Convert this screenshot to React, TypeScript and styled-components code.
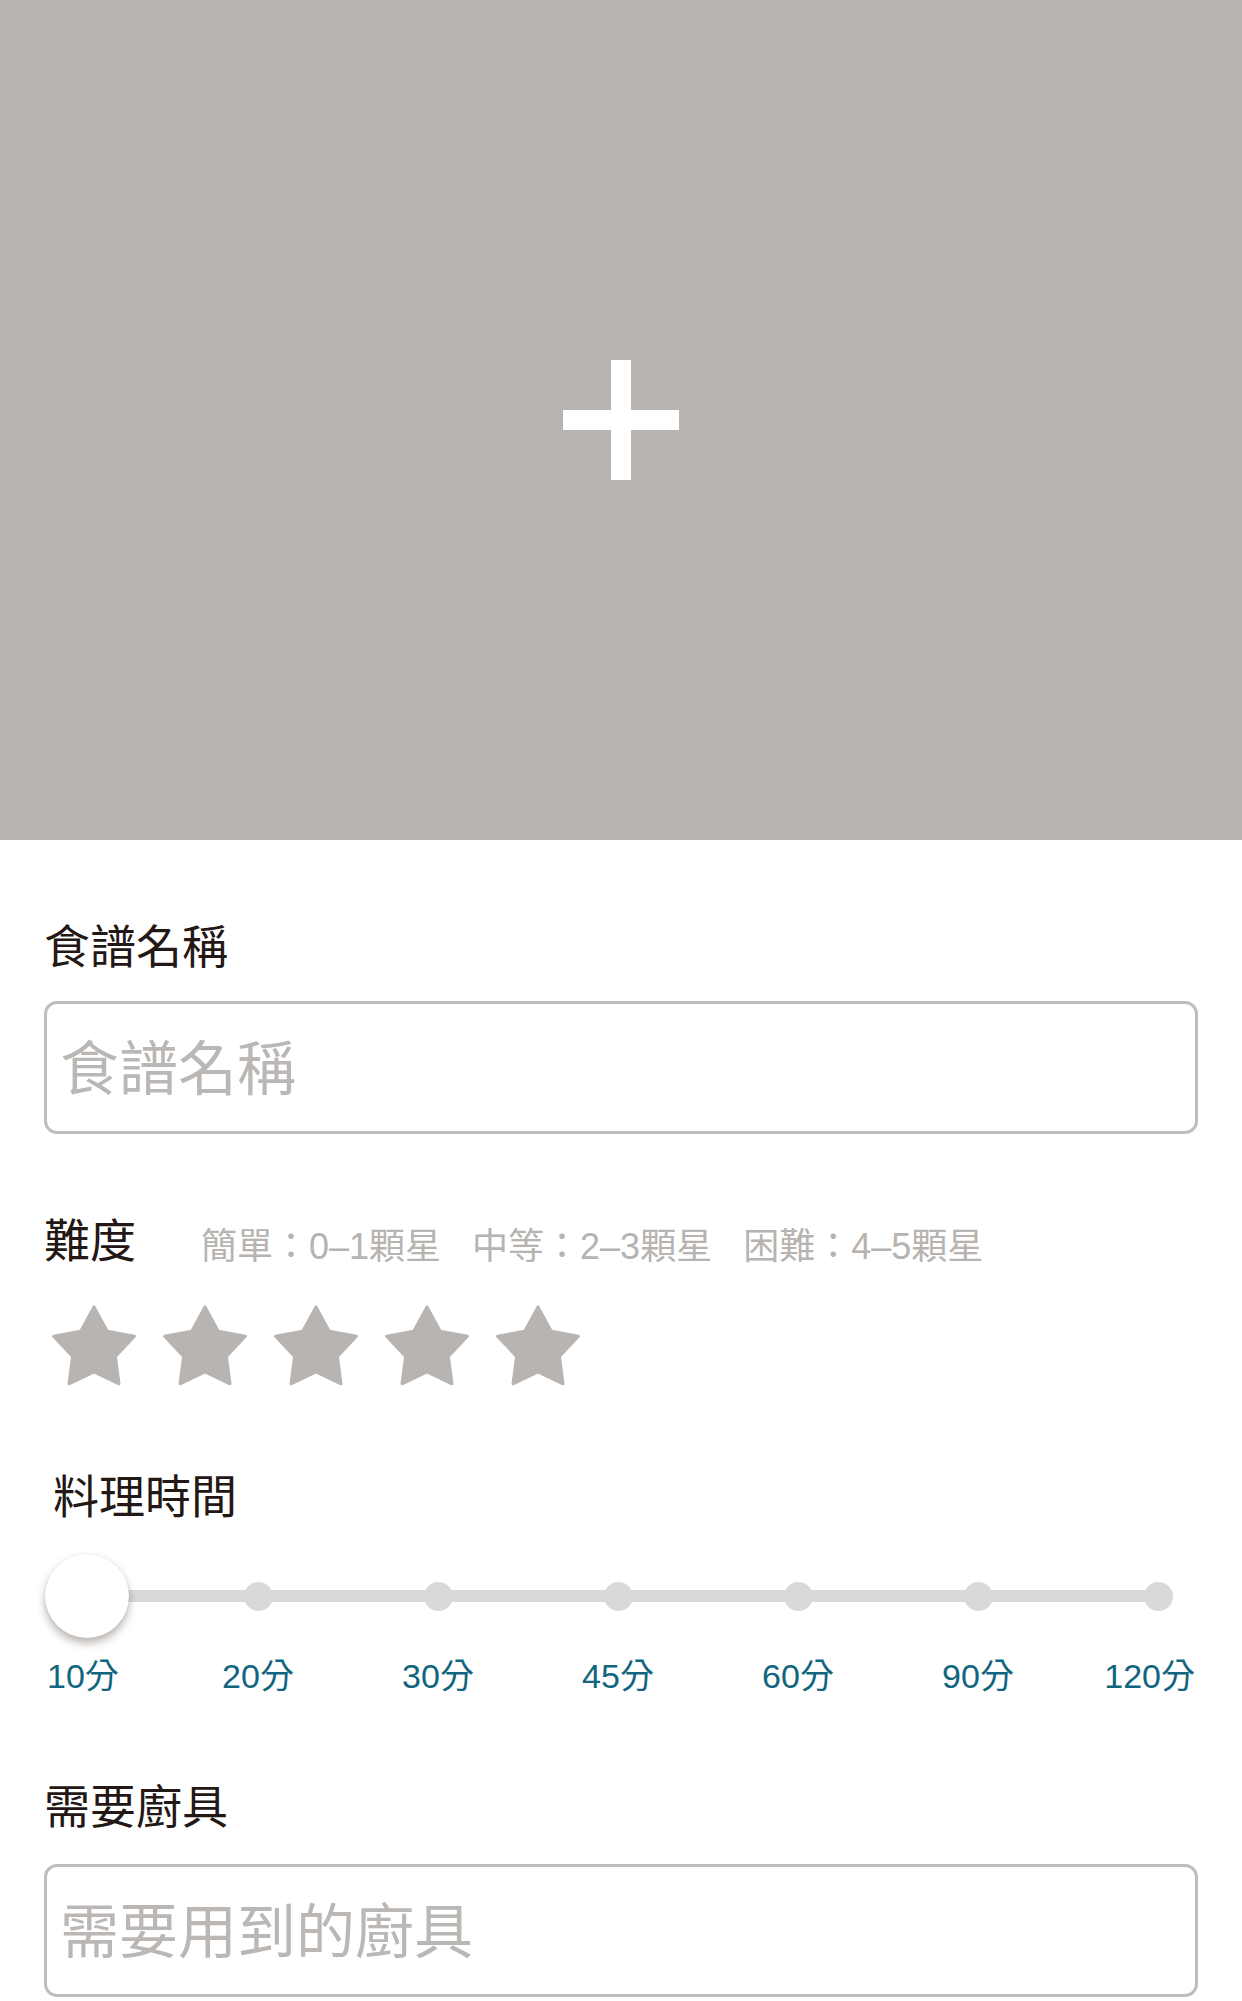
import React from "react";
import styled, { createGlobalStyle } from "styled-components";

const GlobalStyle = createGlobalStyle`
  html, body {
    margin: 0;
    padding: 0;
    background: #ffffff;
  }
  body {
    font-family: "Noto Sans CJK TC", "Noto Sans", sans-serif;
    -webkit-font-smoothing: antialiased;
  }
  *, *::before, *::after {
    box-sizing: border-box;
  }
`;

const Page = styled.main`
  width: 1242px;
  display: flex;
  flex-direction: column;
  background: #ffffff;
`;

const PhotoPicker = styled.div`
  height: 840px;
  display: flex;
  align-items: center;
  justify-content: center;
  background: #b8b4b1;
  cursor: pointer;
`;

const Form = styled.form`
  display: flex;
  flex-direction: column;
  padding: 0 44px;
`;

const Section = styled.section<{ $top: number }>`
  display: flex;
  flex-direction: column;
  margin-top: ${(p) => p.$top}px;
`;

const Label = styled.h2<{ $indent?: number }>`
  margin: 0;
  padding-left: ${(p) => p.$indent ?? 0}px;
  font-size: 46px;
  line-height: 1;
  font-weight: 400;
  color: #231815;
`;

const TextInput = styled.input<{ $gap: number }>`
  display: block;
  width: 100%;
  height: 133px;
  margin-top: ${(p) => p.$gap}px;
  padding: 0 13px 6px;
  border: 3px solid #c1bdba;
  border-radius: 13px;
  background: #ffffff;
  font-family: "Noto Sans CJK TC", "Noto Sans", sans-serif;
  font-size: 59px;
  color: #231815;
  outline: none;

  &::placeholder {
    color: #bbb7b4;
  }
`;

const DifficultyRow = styled.div`
  display: flex;
  align-items: flex-end;
`;

const Hints = styled.div`
  display: flex;
  gap: 31px;
  margin-left: 65px;
  margin-bottom: -5px;
  font-family: "Liberation Sans", "Noto Sans CJK TC", sans-serif;
  font-size: 36px;
  line-height: 1;
  color: #b7b3b0;
`;

const Hint = styled.span``;

const Stars = styled.div`
  display: flex;
  gap: 27px;
  margin-top: 45px;
  padding-left: 8px;
`;

const StarButton = styled.span`
  display: flex;
  width: 84px;
  height: 81px;
  cursor: pointer;
`;

const SLIDER_COLUMNS = "124px repeat(5, 180px) 1fr";

const SliderTrack = styled.div`
  position: relative;
  display: grid;
  grid-template-columns: ${SLIDER_COLUMNS};
  align-items: center;
  height: 84px;
  margin-top: 38px;

  &::before {
    content: "";
    position: absolute;
    left: 43px;
    right: 40px;
    top: 36px;
    height: 12px;
    border-radius: 6px;
    background: #d9d9d9;
  }
`;

type Align = "start" | "center" | "end";

const Stop = styled.div<{ $align: Align }>`
  position: relative;
  z-index: 1;
  display: flex;
  justify-content: ${(p) =>
    p.$align === "start" ? "flex-start" : p.$align === "end" ? "flex-end" : "center"};
  padding-right: ${(p) => (p.$align === "end" ? 25 : 0)}px;
`;

const Dot = styled.span`
  width: 29px;
  height: 29px;
  border-radius: 50%;
  background: #d9d9d9;
`;

const Thumb = styled.span`
  width: 84px;
  height: 84px;
  margin-left: 1px;
  border-radius: 50%;
  background: #ffffff;
  box-shadow: 0 5px 9px rgba(70, 55, 45, 0.38), 0 0 2px rgba(0, 0, 0, 0.08);
`;

const TickLabels = styled.div`
  display: grid;
  grid-template-columns: ${SLIDER_COLUMNS};
  margin-top: 21px;
  font-family: "Liberation Sans", "Noto Sans CJK TC", sans-serif;
  font-size: 34px;
  line-height: 1;
  color: #11657e;
`;

const TickLabel = styled.span<{ $align: Align }>`
  justify-self: ${(p) => p.$align};
  padding-left: ${(p) => (p.$align === "start" ? 3 : 0)}px;
  padding-right: ${(p) => (p.$align === "end" ? 3 : 0)}px;
  white-space: nowrap;
`;

const PlusIcon = () => (
  <svg width="116" height="120" viewBox="0 0 116 120" aria-hidden="true">
    <rect x="0" y="50" width="116" height="20" fill="#ffffff" />
    <rect x="48" y="0" width="20" height="120" fill="#ffffff" />
  </svg>
);

const STAR_POINTS = (() => {
  const cx = 42;
  const cy = 44.4;
  const R = 42.5;
  const r = 22.5;
  const pts: string[] = [];
  for (let k = 0; k < 10; k++) {
    const a = ((-90 + 36 * k) * Math.PI) / 180;
    const rad = k % 2 === 0 ? R : r;
    pts.push(`${(cx + rad * Math.cos(a)).toFixed(2)},${(cy + rad * Math.sin(a)).toFixed(2)}`);
  }
  return pts.join(" ");
})();

const StarIcon = () => (
  <svg width="84" height="81" viewBox="0 0 84 81" aria-hidden="true">
    <polygon
      points={STAR_POINTS}
      fill="#b8b4b1"
      stroke="#b8b4b1"
      strokeWidth="3"
      strokeLinejoin="round"
    />
  </svg>
);

const TIMES = ["10分", "20分", "30分", "45分", "60分", "90分", "120分"];

const alignFor = (i: number, n: number): Align =>
  i === 0 ? "start" : i === n - 1 ? "end" : "center";

export default function App() {
  return (
    <>
      <GlobalStyle />
      <Page>
        <PhotoPicker>
          <PlusIcon />
        </PhotoPicker>
        <Form onSubmit={(e) => e.preventDefault()}>
          <Section $top={80}>
            <Label>食譜名稱</Label>
            <TextInput $gap={35} placeholder="食譜名稱" />
          </Section>

          <Section $top={80}>
            <DifficultyRow>
              <Label>難度</Label>
              <Hints>
                <Hint>簡單：0–1顆星</Hint>
                <Hint>中等：2–3顆星</Hint>
                <Hint>困難：4–5顆星</Hint>
              </Hints>
            </DifficultyRow>
            <Stars>
              {[0, 1, 2, 3, 4].map((i) => (
                <StarButton key={i}>
                  <StarIcon />
                </StarButton>
              ))}
            </Stars>
          </Section>

          <Section $top={84}>
            <Label $indent={9}>料理時間</Label>
            <SliderTrack>
              {TIMES.map((t, i) => (
                <Stop key={t} $align={alignFor(i, TIMES.length)}>
                  {i === 0 ? <Thumb /> : <Dot />}
                </Stop>
              ))}
            </SliderTrack>
            <TickLabels>
              {TIMES.map((t, i) => (
                <TickLabel key={t} $align={alignFor(i, TIMES.length)}>
                  {t}
                </TickLabel>
              ))}
            </TickLabels>
          </Section>

          <Section $top={87}>
            <Label>需要廚具</Label>
            <TextInput $gap={38} placeholder="需要用到的廚具" />
          </Section>
        </Form>
      </Page>
    </>
  );
}
